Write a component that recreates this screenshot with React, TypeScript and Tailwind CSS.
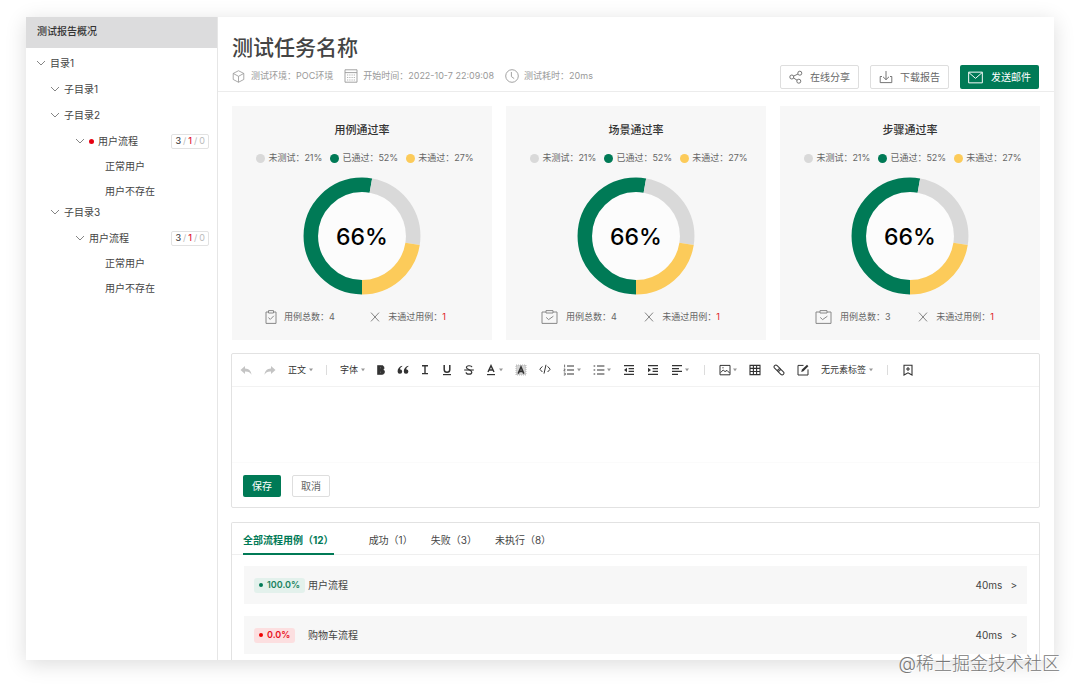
import React from 'react';

const treeRows = [
  { label: '目录1', kind: 'root', space: 'mt-[6px]' },
  { label: '子目录1', kind: 'dir', space: 'mt-[10px]' },
  { label: '子目录2', kind: 'dir', space: 'mt-[10px]' },
  { label: '用户流程', kind: 'flow', space: 'mt-[10px]', failed: true },
  { label: '正常用户', kind: 'leaf', space: 'mt-[9px]' },
  { label: '用户不存在', kind: 'leaf', space: 'mt-[9px]' },
  { label: '子目录3', kind: 'dir', space: 'mt-[5px]' },
  { label: '用户流程', kind: 'flow', space: 'mt-[10px]' },
  { label: '正常用户', kind: 'leaf', space: 'mt-[9px]' },
  { label: '用户不存在', kind: 'leaf', space: 'mt-[9px]' },
];

const indents: Record<string, string> = {
  root: 'pl-[10px]',
  dir: 'pl-6',
  flow: 'pl-[49px]',
  leaf: 'pl-[79px]',
};

const rateCards = [
  { title: '用例通过率', total: 4, wide: false },
  { title: '场景通过率', total: 4, wide: true },
  { title: '步骤通过率', total: 3, wide: true },
];

const legend = [
  { label: '未测试：21%', dot: 'bg-[#d9d9d9]' },
  { label: '已通过：52%', dot: 'bg-[#007a56]' },
  { label: '未通过：27%', dot: 'bg-[#fccb5a]' },
];

const tabs = ['成功（1）', '失败（3）', '未执行（8）'];

const flows = [
  { name: '用户流程', rate: '100.0%', ok: true },
  { name: '购物车流程', rate: '0.0%', ok: false },
];

const Chevron = () => (
  <svg viewBox="0 0 10 10" className="w-[10px] h-[10px] shrink-0" fill="none" stroke="#777" strokeWidth="0.9">
    <path d="M1 3 L5 7 L9 3" />
  </svg>
);

const Caret = () => (
  <svg viewBox="0 0 4 4" className="w-1 h-1 shrink-0" fill="#999">
    <path d="M0 0.5 H4 L2 3.2 Z" />
  </svg>
);

/* Header and card icons */

const Outline = ({ className, children }: { className: string; children: React.ReactNode }) => (
  <svg viewBox="0 0 14 14" className={`shrink-0 ${className}`} fill="none" stroke="currentColor" strokeWidth="0.9">
    {children}
  </svg>
);

const CubeIcon = () => (
  <Outline className="w-[13px] h-[13px]">
    <path d="M7 0.8 L12.7 3.7 V10.2 L7 13.2 L1.3 10.2 V3.7 Z M1.3 3.7 L7 6.8 L12.7 3.7 M7 6.8 V13.2" />
  </Outline>
);

const CalendarIcon = () => (
  <Outline className="w-[14px] h-[14px]">
    <path d="M1 0.8 H13 V13.2 H1 Z M1 3.6 H13" />
    <path d="M3.2 6 H11 M3.2 8.5 H11 M3.2 11 H11" strokeDasharray="1 1.2" />
  </Outline>
);

const ClockIcon = () => (
  <Outline className="w-[14px] h-[14px]">
    <circle cx="7" cy="7" r="6.3" />
    <path d="M6.4 3 V7.6 L9.2 9.6" />
  </Outline>
);

const ShareIcon = () => (
  <Outline className="w-[14px] h-[14px]">
    <circle cx="2.8" cy="7" r="2" />
    <circle cx="10.8" cy="3.2" r="2" />
    <circle cx="9.8" cy="11.2" r="2" />
    <path d="M4.6 6.1 L9 4 M4.6 8 L8 10.2" />
  </Outline>
);

const DownloadIcon = () => (
  <Outline className="w-[14px] h-[14px]">
    <path d="M3 6.5 H1.2 V12.6 H12.8 V6.5 H11 M7 1 V9.5 M4 6.8 L7 9.7 L10 6.8" />
  </Outline>
);

const MailIcon = () => (
  <Outline className="w-[15px] h-[15px]">
    <path d="M0.6 2 H13.4 V12 H0.6 Z M0.8 2.4 L7 7.8 L13.2 2.4" />
  </Outline>
);

const ClipboardIcon = ({ wide }: { wide: boolean }) =>
  wide ? (
    <svg viewBox="0 0 17 14" className="w-[17px] h-[14px] shrink-0" fill="none" stroke="#888" strokeWidth="1">
      <path d="M5 2 H1 V13.4 H16 V2 H12 M5 0.6 H12 V3 H5 Z M5.2 7.4 L7.6 9.6 L12.4 6.2" />
    </svg>
  ) : (
    <svg viewBox="0 0 12 14" className="w-3 h-[14px] shrink-0" fill="none" stroke="#888" strokeWidth="1">
      <path d="M3.5 2 H1 V13.4 H11 V2 H8.5 M3.5 0.6 H8.5 V3 H3.5 Z M3.4 7.6 L5.3 9.4 L8.8 5.8" />
    </svg>
  );

const CrossIcon = () => (
  <svg viewBox="0 0 10 10" className="w-[10px] h-[10px] shrink-0" fill="none" stroke="#777" strokeWidth="0.9">
    <path d="M1 0.6 L9 9.4 M9 0.6 L1 9.4" />
  </svg>
);

/* Editor toolbar */

const Tool = ({ label, caret, muted, children }: { label: string; caret?: boolean; muted?: boolean; children: React.ReactNode }) => (
  <button type="button" aria-label={label} className={`flex items-center gap-0.5 ${muted ? 'text-[#c4c4c4]' : 'text-[#333]'}`}>
    <svg viewBox="0 0 12 12" className="w-3 h-3" fill="none" stroke="currentColor" strokeWidth="1.2">
      {children}
    </svg>
    {caret && <Caret />}
  </button>
);

const ToolSelect = ({ label, value }: { label: string; value: string }) => (
  <label className="flex items-center gap-0.5 text-[9px] text-[#333]">
    <select aria-label={label} className="appearance-none bg-transparent">
      <option>{value}</option>
    </select>
    <Caret />
  </label>
);

const Divider = () => <span className="w-px h-[10px] bg-[#dcdcdc]" />;

const Toolbar = () => (
  <div className="flex items-center h-[33px] pl-2 border-b border-[#f2f2f2]">
    <div className="flex items-center gap-3 pr-[13px]">
      <Tool label="撤销" muted>
        <path d="M5 2 L0.5 6 L5 10 V7.6 C8 7.4 10 8.2 11.5 10.8 C11.2 7 9 4.6 5 4.4 Z" fill="currentColor" stroke="none" />
      </Tool>
      <Tool label="重做" muted>
        <path d="M7 2 L11.5 6 L7 10 V7.6 C4 7.4 2 8.2 0.5 10.8 C0.8 7 3 4.6 7 4.4 Z" fill="currentColor" stroke="none" />
      </Tool>
      <ToolSelect label="段落" value="正文" />
    </div>
    <Divider />
    <div className="flex items-center gap-[10px] pl-[13px] pr-3">
      <ToolSelect label="字体" value="字体" />
      <Tool label="加粗">
        <path d="M2.5 1.5 H6.5 A2.3 2.3 0 0 1 8.2 5.6 A2.6 2.6 0 0 1 7 10.5 H2.5 Z" fill="currentColor" stroke="currentColor" strokeWidth="0.6" />
        <path d="M5 3.8 H6 M5 8.2 H6" stroke="#888" strokeWidth="0.7" />
      </Tool>
      <Tool label="引用">
        <path
          d="M5.2 1.8 C2.2 2.6 0.6 4.8 0.6 7.4 A2.3 2.3 0 1 0 3 5.2 C3.2 4 4 3 5.2 2.6 Z M11.4 1.8 C8.4 2.6 6.8 4.8 6.8 7.4 A2.3 2.3 0 1 0 9.2 5.2 C9.4 4 10.2 3 11.4 2.6 Z"
          fill="currentColor"
          stroke="none"
        />
      </Tool>
      <Tool label="斜体">
        <path d="M3 1.8 H9 M6 1.8 V9.6 M3 9.6 H9" strokeWidth="1.4" />
      </Tool>
      <Tool label="下划线">
        <path d="M3.2 1 V5.4 A2.8 2.8 0 0 0 8.8 5.4 V1" strokeWidth="1.5" />
        <path d="M2 10.6 H10" />
      </Tool>
      <Tool label="删除线">
        <path d="M9 3.2 C8.4 1.2 3.4 1.2 3.4 3.6 C3.4 5.8 8.8 5.4 8.8 8.2 C8.8 10.8 3.4 10.8 3 8.4" />
        <path d="M1.2 6 H10.8" strokeWidth="1.1" />
      </Tool>
      <Tool label="文字颜色" caret>
        <path d="M3 8 L6 1.6 L9 8 M4 6 H8" strokeWidth="1.4" />
        <path d="M2 10.6 H10" />
      </Tool>
    </div>
    <div className="flex items-center gap-3 pr-[15px]">
      <Tool label="背景颜色">
        <path d="M1 1 H11 V11 H1 Z" fill="#d4d4d4" stroke="#aaa" strokeWidth="0.8" strokeDasharray="1 1" />
        <path d="M3.2 9.6 L6 3 L8.8 9.6 M4 7.4 H8" strokeWidth="1.6" />
      </Tool>
      <Tool label="代码">
        <path d="M3.4 2.4 L0.8 5.2 L3.4 8 M8.6 2.4 L11.2 5.2 L8.6 8 M7 0.8 L5 9.6" strokeWidth="1" />
      </Tool>
      <Tool label="有序列表" caret>
        <path d="M4 2 H11 M4 6 H11 M4 10 H11" />
        <path d="M1.6 0.6 V3.4 M0.8 5 H2.2 L0.8 7 H2.4 M0.8 9 H2.2 V11 H0.8" strokeWidth="0.7" />
      </Tool>
      <Tool label="无序列表" caret>
        <path d="M4 2 H11.4 M4 6 H11.4 M4 10 H11.4" />
        <path d="M0.6 2 H2.2 M0.6 6 H2.2 M0.6 10 H2.2" />
      </Tool>
      <Tool label="减少缩进">
        <path d="M1 1.6 H11 M5.6 4.6 H11 M5.6 7.4 H11 M1 10.4 H11" />
        <path d="M4 3.8 V8.2 L1 6 Z" fill="currentColor" stroke="none" />
      </Tool>
      <Tool label="增加缩进">
        <path d="M1 1.6 H11 M5.6 4.6 H11 M5.6 7.4 H11 M1 10.4 H11" />
        <path d="M1 3.8 V8.2 L4 6 Z" fill="currentColor" stroke="none" />
      </Tool>
      <Tool label="对齐" caret>
        <path d="M1 1.6 H11 M1 4.6 H8 M1 7.4 H11 M1 10.4 H7" />
      </Tool>
    </div>
    <Divider />
    <div className="flex items-center gap-3 px-[14px]">
      <Tool label="图片" caret>
        <path d="M1 1.4 H11 V10.8 H1 Z" strokeWidth="1" />
        <path d="M1.6 8.6 L4.2 6 L6 7.6 L8 6.4 L10.6 9 M3.4 3.8 H4.6" strokeWidth="1" />
      </Tool>
      <Tool label="表格">
        <path d="M1 1.4 H11 V10.6 H1 Z M1 4.4 H11 M1 7.5 H11 M4.4 1.4 V10.6 M7.6 1.4 V10.6" strokeWidth="1.1" />
      </Tool>
      <Tool label="链接">
        <g transform="rotate(45 6 6)" strokeWidth="1">
          <rect x="-0.2" y="4.2" width="7.2" height="3.6" rx="1.8" />
          <rect x="5" y="4.2" width="7.2" height="3.6" rx="1.8" />
        </g>
      </Tool>
      <Tool label="编辑">
        <path d="M6.5 1.4 H1 V11 H11 V5.4" strokeWidth="1" />
        <path d="M4.2 8 L5 5.6 L10 0.8 L11.4 2.2 L6.4 7.2 Z" fill="currentColor" stroke="none" />
      </Tool>
      <ToolSelect label="元素标签" value="无元素标签" />
    </div>
    <Divider />
    <div className="flex items-center pl-[14px]">
      <Tool label="书签">
        <path d="M2 1.2 H10 V11 L6 8.8 L2 11 Z M6 3 V7 M4 5 H8" strokeWidth="1.1" />
      </Tool>
    </div>
  </div>
);

const Sidebar = () => (
  <aside className="w-48 shrink-0 border-r border-[#e6e6e6] bg-white">
    <h2 className="h-[31px] pl-[11px] flex items-center bg-[#dcdcdd] text-[10px] font-medium text-[#333]">
      <span className="pb-0.5">测试报告概况</span>
    </h2>
    <ul className="pt-px text-[10px] text-[#444]">
      {treeRows.map((row, idx) => (
        <li key={idx} className={`flex items-center justify-between h-4 pr-2 ${row.space} ${indents[row.kind]}`}>
          {row.kind === 'leaf' ? (
            <a href="#leaf">{row.label}</a>
          ) : (
            <button type="button" className="flex items-center gap-1">
              <Chevron />
              {row.failed && <span className="w-[5px] h-[5px] rounded-full bg-[#e60012]" />}
              <span>{row.label}</span>
            </button>
          )}
          {row.kind === 'flow' && (
            <span className="h-[15px] px-[3px] flex items-center gap-0.5 rounded-[2px] border border-[#e2e2e2] text-[9px] text-[#bbb]">
              <b className="font-medium text-[#444]">3</b>/<b className="font-medium text-[#e0203a]">1</b>/<span>0</span>
            </span>
          )}
        </li>
      ))}
    </ul>
  </aside>
);

const Header = () => (
  <header className="flex items-end justify-between h-[75px] pl-[14px] pr-[15px] border-b border-[#ececec]">
    <div className="pb-[7px]">
      <h1 className="text-[21px] leading-8 font-medium text-[#444]">测试任务名称</h1>
      <div className="mt-1 flex items-center gap-[11px] h-4 text-[9px] text-[#999]">
        <span className="flex items-center gap-[6px]">
          <CubeIcon />
          测试环境：POC环境
        </span>
        <span className="flex items-center gap-[5px]">
          <CalendarIcon />
          开始时间：2022-10-7 22:09:08
        </span>
        <span className="flex items-center gap-[5px]">
          <ClockIcon />
          测试耗时：20ms
        </span>
      </div>
    </div>
    <div className="flex gap-[11px] pb-0.5 text-[10px]">
      <button type="button" className="h-6 px-2 flex items-center gap-[7px] rounded-[2px] border border-[#dedede] text-[#666]">
        <ShareIcon />
        在线分享
      </button>
      <button type="button" className="h-6 px-2 flex items-center gap-[7px] rounded-[2px] border border-[#dedede] text-[#666]">
        <DownloadIcon />
        下载报告
      </button>
      <button type="button" className="h-6 px-2 flex items-center gap-2 rounded-[2px] bg-[#007a56] text-white">
        <MailIcon />
        发送邮件
      </button>
    </div>
  </header>
);

const Donut = () => (
  <div className="grid place-items-center">
    <svg viewBox="0 0 118 118" className="col-start-1 row-start-1 w-[118px] h-[118px]" fill="none" strokeWidth="14.5">
      <circle cx="59" cy="59" r="44" fill="#fcfcfc" />
      <g transform="rotate(90 59 59)">
        <circle cx="59" cy="59" r="51.2" stroke="#007a56" pathLength="360" strokeDasharray="190 170" />
        <circle cx="59" cy="59" r="51.2" stroke="#d9d9d9" pathLength="360" strokeDasharray="89 271" strokeDashoffset="-190" />
        <circle cx="59" cy="59" r="51.2" stroke="#fccb5a" pathLength="360" strokeDasharray="81 279" strokeDashoffset="-279" />
      </g>
    </svg>
    <span className="col-start-1 row-start-1 pt-0.5 text-[23px] font-medium text-black">66%</span>
  </div>
);

const RateCard = ({ title, total, wide }: { title: string; total: number; wide: boolean }) => (
  <section className="bg-[#f7f7f7] pt-4 pb-[15px]">
    <h3 className="h-4 leading-4 text-center text-[11px] font-medium text-[#333]">{title}</h3>
    <ul className="mt-3 pl-[6px] flex justify-center gap-2 h-4 text-[9px] text-[#666]">
      {legend.map((item) => (
        <li key={item.label} className="flex items-center gap-[3px]">
          <span className={`w-[9px] h-[9px] rounded-full ${item.dot}`} />
          {item.label}
        </li>
      ))}
    </ul>
    <div className="mt-[11px]">
      <Donut />
    </div>
    <div className="mt-[14px] h-4 pl-[33px] pr-[46px] flex items-center justify-between text-[9px] text-[#666]">
      <span className={`flex items-center ${wide ? 'gap-2 pl-0.5' : 'gap-[7px]'}`}>
        <ClipboardIcon wide={wide} />
        用例总数：{total}
      </span>
      <span className="flex items-center gap-2">
        <CrossIcon />
        <span>
          未通过用例：<span className="text-[#e02020]">1</span>
        </span>
      </span>
    </div>
  </section>
);

const Editor = () => (
  <section className="mt-[13px] -ml-px rounded-[2px] border border-[#e2e2e2]">
    <Toolbar />
    <textarea aria-label="正文内容" className="block w-full h-[76px] resize-none outline-none border-b border-[#fbfbfb] p-3 text-[10px]" />
    <div className="flex gap-[11px] px-[11px] pt-3 pb-[10px] text-[10px]">
      <button type="button" className="h-[22px] px-[9px] rounded-[2px] bg-[#007a56] text-white">
        保存
      </button>
      <button type="button" className="h-[22px] px-2 rounded-[2px] border border-[#dedede] text-[#666]">
        取消
      </button>
    </div>
  </section>
);

const FlowList = () => (
  <section className="mt-[14px] -ml-px rounded-t-[2px] border border-b-0 border-[#e2e2e2]">
    <div role="tablist" className="flex h-8 pl-[11px] border-b border-[#efefef] text-[10px] text-[#444]">
      <button type="button" role="tab" aria-selected="true" className="-mb-px mr-[35px] pt-1 border-b-2 border-[#007a56] font-bold text-[#007a56]">
        全部流程用例（12）
      </button>
      <div className="flex gap-[18px]">
        {tabs.map((tab) => (
          <button key={tab} type="button" role="tab" aria-selected="false" className="pt-[3px]">
            {tab}
          </button>
        ))}
      </div>
    </div>
    <ul className="pt-[11px] px-3 pb-3 flex flex-col gap-3 text-[10px] text-[#444]">
      {flows.map((flow) => (
        <li key={flow.name} className="h-[38px] px-[10px] flex items-center bg-[#f7f7f7]">
          <span className="w-[54px] flex">
            <span
              className={`h-[15px] px-[5px] flex items-center gap-1 rounded-[3px] text-[9px] font-semibold ${
                flow.ok ? 'bg-[#e3f1ec] text-[#18815f]' : 'bg-[#fcdfe0] text-[#e81123]'
              }`}
            >
              <span className={`w-1 h-1 rounded-full ${flow.ok ? 'bg-[#007a56]' : 'bg-[#f00000]'}`} />
              {flow.rate}
            </span>
          </span>
          <span>{flow.name}</span>
          <span className="ml-auto">40ms</span>
          <span className="ml-2">&gt;</span>
        </li>
      ))}
    </ul>
  </section>
);

export default function App() {
  return (
    <div className="relative h-screen overflow-hidden bg-white px-[26px] pt-[17px] pb-[34px] font-['Inter','Noto_Sans_CJK_SC',sans-serif]">
      <div className="flex h-full overflow-hidden bg-white shadow-[0_4px_20px_rgba(0,0,0,0.14)]">
        <Sidebar />
        <main className="flex-1 min-w-0">
          <Header />
          <div className="px-[14px] pt-[14px]">
            <div className="grid grid-cols-3 gap-[14px]">
              {rateCards.map((card) => (
                <RateCard key={card.title} {...card} />
              ))}
            </div>
            <Editor />
            <FlowList />
          </div>
        </main>
      </div>
      <span className="absolute right-5 bottom-[18px] text-lg leading-6 font-light text-[#777] [text-shadow:1px_1px_1px_#fff]">
        @稀土掘金技术社区
      </span>
    </div>
  );
}
